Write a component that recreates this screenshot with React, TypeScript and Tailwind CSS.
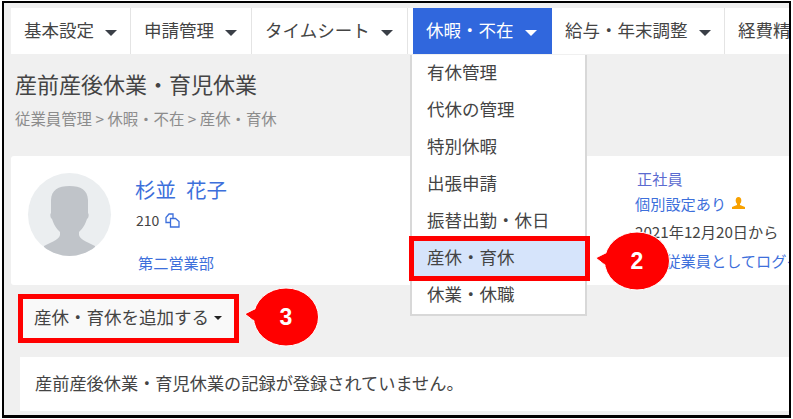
const jp = '[font-family:"Noto_Sans_CJK_JP","Noto_Sans",sans-serif]';

const navItems = [
  { label: '基本設定', width: 'w-[120px]' },
  { label: '申請管理', width: 'w-[121px]' },
  { label: 'タイムシート', width: 'w-[156px]' },
];

const menuItems = ['有休管理', '代休の管理', '特別休暇', '出張申請', '振替出勤・休日', '産休・育休', '休業・休職'];

function Caret({ className }: { className: string }) {
  return (
    <svg width="12" height="6" viewBox="0 0 12 6" className={className}>
      <path d="M0 0h12L6 6z" fill="currentColor" />
    </svg>
  );
}

function Callout({ n, className }: { n: number; className: string }) {
  return (
    <div className={`absolute ${className}`}>
      <svg width="78" height="62" viewBox="0 0 78 62">
        <path d="M1 27 L15 20 L15 38 Z" fill="#ff0000" stroke="#ffffff" strokeWidth="1" />
        <ellipse cx="42" cy="30" rx="32.5" ry="29" fill="#ff0000" stroke="#ffffff" strokeWidth="1" />
        <path d="M2 27 L16 20 L16 38 Z" fill="#ff0000" />
      </svg>
      <span className="absolute left-[11px] top-0 w-[62px] h-[60px] flex items-center justify-center text-white font-bold text-[23px] [font-family:'Liberation_Sans',sans-serif]">
        {n}
      </span>
    </div>
  );
}

export default function App() {
  return (
    <div className="w-[793px] h-[419px] bg-white pl-[2px] pr-[2px] pt-[1px] pb-[1px]">
      <div
        className={`relative h-full overflow-hidden border-l-2 border-r-2 border-t-2 border-b-[3px] border-black bg-[#f0f0f0] text-[#444] ${jp}`}
      >
        {/* nav */}
        <div className="flex h-[46px] mt-[5px] ml-[7px] bg-white text-[17.5px] whitespace-nowrap">
          {navItems.map((item) => (
            <div
              key={item.label}
              className={`${item.width} shrink-0 pl-[13px] pb-[2px] border-r border-[#e4e4e4] flex items-center gap-[11px]`}
            >
              <span>{item.label}</span>
              <Caret className="text-[#3a3f47] mt-[5px]" />
            </div>
          ))}
          <div className="w-[5px] shrink-0" />
          <div className="w-[139px] shrink-0 pl-[13px] pb-[2px] bg-[#3067dd] text-white flex items-center gap-[11px]">
            <span>休暇・不在</span>
            <Caret className="text-white mt-[5px]" />
          </div>
          <div className="w-[173px] shrink-0 pl-[13px] pb-[2px] border-r border-[#e4e4e4] flex items-center gap-[11px]">
            <span>給与・年末調整</span>
            <Caret className="text-[#3a3f47] mt-[5px]" />
          </div>
          <div className="pl-[13px] pb-[2px] flex items-center">
            <span>経費精算</span>
          </div>
        </div>

        {/* heading */}
        <div className="pl-[11px] pt-[13px]">
          <h1 className="text-[22px] leading-[32px] font-normal text-[#444]">産前産後休業・育児休業</h1>
          <p className="mt-[8px] text-[15.4px] leading-[22px] text-[#8c8c8c]">
            従業員管理 &gt; 休暇・不在 &gt; 産休・育休
          </p>
        </div>

        {/* employee card */}
        <div className="mt-[27px] ml-[7px] h-[129px] bg-white rounded-l-[3px] flex pl-[17px] pt-[17px]">
          <div className="w-[83px] h-[83px] rounded-full bg-[#ebeef0] overflow-hidden shrink-0">
            <svg viewBox="0 0 83 83" width="83" height="83">
              <path
                d="M41.5 13C30 13 23.5 17 23 27L23 40C22 41 22 45 24 46C26 52 28 55 32 59L32 62C31 66 26 68 16 73L16 90L67 90L67 73C57 68 52 66 51 62L51 59C55 55 57 52 59 46C61 45 61 41 60 40L60 27C59.5 17 53 13 41.5 13Z"
                fill="#c0c4c9"
              />
            </svg>
          </div>
          <div className="ml-[25px] w-[500px] shrink-0 flex flex-col">
            <div className="flex gap-[10px] text-[20.5px] leading-[28px] text-[#3d6fdb] -ml-[1px] mt-[2px]">
              <span>杉並</span>
              <span>花子</span>
            </div>
            <div className="mt-[6px] flex items-center gap-[6px] text-[14px] leading-[22px] text-[#444]">
              <span>210</span>
              <svg width="15" height="15" viewBox="0 0 15 15" fill="none" stroke="#3d6fdb" strokeWidth="1.3">
                <path d="M5 9.5H1V4.5L4 1H8V5" />
                <path d="M5.500 5.500H10.500L14 8.500V14H5.500Z" />
              </svg>
            </div>
            <div className="mt-[20px] ml-[2px] text-[15.2px] leading-[22px] text-[#3d6fdb]">第二営業部</div>
          </div>
          <div className="w-[200px] shrink-0 text-[15.2px] leading-[22px] whitespace-nowrap -ml-[1px]">
            <div className="ml-[2px] text-[#5b6bd0] -mt-[6px]">正社員</div>
            <div className="mt-[3px] flex items-center gap-[6px] text-[#3d6fdb]">
              <span>個別設定あり</span>
              <svg width="13" height="12" viewBox="0 0 13 12" fill="#f7a100">
                <ellipse cx="6.500" cy="3.500" rx="2.800" ry="3.500" />
                <path d="M5 6h3v2l5 2v2H0v-2l5-2z" />
              </svg>
            </div>
            <div className="mt-[6px] text-[#444]">2021年12月20日から</div>
            <div className="mt-[7px] text-[#3d6fdb]">この従業員としてログイン</div>
          </div>
        </div>

        {/* add button */}
        <div className="mt-[9px] ml-[14px] w-[221px] h-[49px] border-[5px] border-[#ff0000] bg-[#f9f9f9] flex items-center gap-[5px] pl-[11px] pb-[3px] text-[17.5px] whitespace-nowrap">
          <span>産休・育休を追加する</span>
          <Caret className="text-[#222] w-[8px] h-[4px] mt-[2px]" />
        </div>

        {/* empty message */}
        <div className="mt-[14px] ml-[16px] h-[54px] bg-white pl-[15px] pb-[3px] flex items-center text-[17.2px] whitespace-nowrap">
          産前産後休業・育児休業の記録が登録されていません。
        </div>

        {/* dropdown */}
        <div className="absolute left-[406px] top-[52px] w-[177px] h-[261px] bg-white border-2 border-[#d8d8d8] border-t-0 text-[17.5px] flex flex-col">
          {menuItems.map((item) => (
            <div
              key={item}
              className={`h-[37px] shrink-0 pl-[15px] pb-[2px] flex items-center whitespace-nowrap ${
                item === '産休・育休' ? 'bg-[#d6e4fb]' : ''
              }`}
            >
              {item}
            </div>
          ))}
        </div>

        {/* highlight on menu item */}
        <div className="absolute left-[405px] top-[233px] w-[181px] h-[45px] border-[5px] border-[#ff0000]" />

        <Callout n={2} className="left-[591px] top-[228px]" />
        <Callout n={3} className="left-[240px] top-[284px]" />
      </div>
    </div>
  );
}
